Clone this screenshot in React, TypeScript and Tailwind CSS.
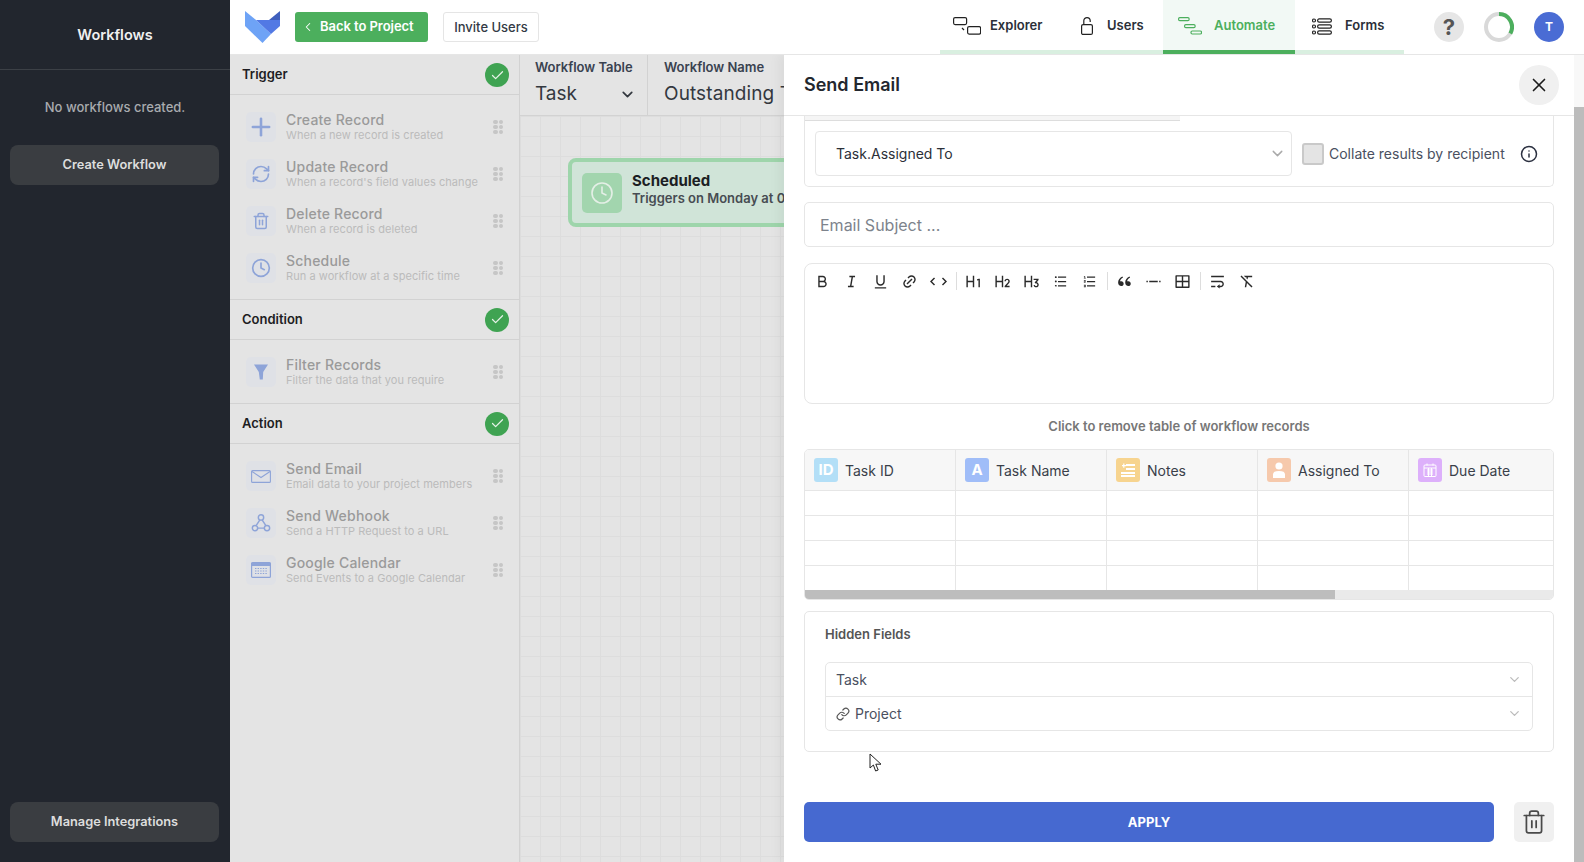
import { Check, ChevronDown, ChevronLeft, Clock, Info, Link, Plus, RefreshCw, Trash2, X } from "lucide-react";
import type { ReactNode } from "react";
import {
  RiBold,
  RiCodeSLine,
  RiDoubleQuotesL,
  RiFormatClear,
  RiH1,
  RiH2,
  RiH3,
  RiItalic,
  RiLayoutGridLine,
  RiLinkM,
  RiListOrdered,
  RiListUnordered,
  RiSeparator,
  RiTextWrap,
  RiUnderline,
} from "react-icons/ri";

function Logo() {
  return (
    <svg width="36" height="33" viewBox="0 0 36 33">
      <polygon points="0,0 11,9 26,23 17.500,32 0,15" fill="#6ea3f6" />
      <polygon points="11,9 35,9 35,15 26,23" fill="#5279e4" />
      <polygon points="24,9 35,0 35,9" fill="#3f5fbd" />
    </svg>
  );
}

function ExplorerIcon() {
  return (
    <svg width="28" height="18" viewBox="0 0 28 18" fill="none" stroke="#222" strokeWidth="1.2">
      <rect x="0.6" y="0.6" width="13" height="7" rx="1.5" />
      <rect x="14.6" y="9.6" width="13" height="7.5" rx="1.5" />
      <path d="M9 11l2 2" />
    </svg>
  );
}

function LockIcon() {
  return (
    <svg width="14" height="18" viewBox="0 0 14 18" fill="none" stroke="#222" strokeWidth="1.2">
      <rect x="1.600" y="7.600" width="10.800" height="9.800" rx="1.500" />
      <path d="M3.800 7.600V3.800a3.200 3.200 0 0 1 6.400 0V5" />
    </svg>
  );
}

function AutomateIcon() {
  return (
    <svg width="24" height="18" viewBox="0 0 24 18" fill="none" stroke="#4caf5d" strokeWidth="1.2">
      <rect x="0.6" y="0.6" width="10.5" height="3" rx="1.2" />
      <rect x="6.6" y="7.6" width="10.5" height="3" rx="1.2" />
      <rect x="13" y="14" width="10.5" height="3" rx="1.2" />
    </svg>
  );
}

function FormsIcon() {
  return (
    <svg width="20" height="17" viewBox="0 0 20 17" fill="none" stroke="#222" strokeWidth="1.2">
      <circle cx="2" cy="2.5" r="1.5" />
      <circle cx="2" cy="8.5" r="1.5" />
      <circle cx="2" cy="14.5" r="1.5" />
      <rect x="5.6" y="0.9" width="13.8" height="3.2" rx="1.6" />
      <rect x="5.6" y="6.9" width="13.8" height="3.2" rx="1.6" />
      <rect x="5.6" y="12.9" width="13.8" height="3.2" rx="1.6" />
    </svg>
  );
}

function FunnelIcon() {
  return (
    <svg width="16" height="16" viewBox="0 0 16 16" fill="#8ea4d8">
      <path d="M1 .5h14l-4.800 7.500L9.800 15.500H6.800L5.800 8z" />
    </svg>
  );
}

function MailIcon() {
  return (
    <svg width="20" height="13" viewBox="0 0 20 13" fill="none" stroke="#8ea4d8" strokeWidth="1.1">
      <rect x="0.6" y="0.6" width="18.8" height="11.8" rx="1" />
      <path d="M1 1.500l9 6 9-6" />
    </svg>
  );
}

function WebhookIcon() {
  return (
    <svg width="20" height="20" viewBox="0 0 18 18" fill="none" stroke="#8ea4d8" strokeWidth="1.3">
      <circle cx="9" cy="4" r="2.4" />
      <circle cx="3.6" cy="13.6" r="2.4" />
      <circle cx="14.4" cy="13.6" r="2.4" />
      <path d="M8 6.2L4.6 11.4M10 6.2l3.4 5.2M6 13.6h6" />
    </svg>
  );
}

function CalendarIcon() {
  return (
    <svg width="20" height="16" viewBox="0 0 20 16" fill="none">
      <rect x="0.6" y="0.6" width="18.8" height="14.8" rx="1" stroke="#8ea4d8" strokeWidth="1.2" />
      <rect x="0.6" y="0.6" width="18.8" height="3.4" fill="#8ea4d8" />
      <path d="M4 6.5h12M4 9h12M4 11.5h12" stroke="#8ea4d8" strokeWidth="1.2" strokeDasharray="1.4 1.2" />
    </svg>
  );
}

function Cursor() {
  return (
    <svg width="13" height="20" viewBox="0 0 13 20" fill="white" stroke="#222" strokeWidth="1" className="absolute top-[699px] left-[85px]">
      <path d="M1 1v14l3.400-3 2.200 6 2.600-1-2.400-5.800H12z" />
    </svg>
  );
}

function Dots() {
  return (
    <div className="grid grid-cols-2 gap-x-[1px] gap-y-[0.5px]">
      {[0, 1, 2, 3, 4, 5].map((i) => (
        <span key={i} className="h-[4.5px] w-[4.5px] rounded-full bg-[#c6c6c6]" />
      ))}
    </div>
  );
}

function PaletteItem({ icon, title, sub }: { icon: ReactNode; title: string; sub: string }) {
  return (
    <div className="flex h-[30px] items-center">
      <div className="flex h-[30px] w-[30px] shrink-0 items-center justify-center rounded-[5px] bg-[#dfe1e6]">{icon}</div>
      <div className="ml-[10px] min-w-0 flex-1">
        <div className="text-[14px] leading-[16px] font-medium tracking-[0.2px] text-[#9a9a9a]">{title}</div>
        <div className="text-[11px] leading-[14px] tracking-[0.06px] text-[#bbbbbb]">{sub}</div>
      </div>
      <Dots />
    </div>
  );
}

function Section({ title, head, children }: { title: string; head: string; children: ReactNode }) {
  return (
    <section className="border-b border-[#d2d2d2] last:border-b-0">
      <div className={`flex items-center justify-between border-b border-[#d2d2d2] pr-[10px] pl-3 ${head}`}>
        <span className="text-[13px] font-semibold text-[#1d1d22]">{title}</span>
        <span className="flex h-6 w-6 items-center justify-center rounded-full bg-[#3fa352]">
          <Check size={15} color="#e6f2e8" strokeWidth={2} />
        </span>
      </div>
      <div className="flex flex-col gap-[17px] pt-[17px] pr-[16px] pb-[16px] pl-[16px]">{children}</div>
    </section>
  );
}

function Tab({ icon, label, className, active }: { icon: ReactNode; label: string; className: string; active?: boolean }) {
  return (
    <div
      className={`flex h-[54px] items-center border-b-4 pt-[2px] ${className} ${
        active ? "border-[#4caf5d] bg-[#f2f9f5] text-[#4caf5d]" : "border-[#d9efe0] text-[#2b2f38]"
      }`}
    >
      {icon}
      <span className="text-[13px] font-semibold">{label}</span>
    </div>
  );
}

function ColIcon({ color, children }: { color: string; children: ReactNode }) {
  return (
    <span className={`flex h-6 w-6 shrink-0 items-center justify-center rounded-[3px] text-[15px] font-bold text-white ${color}`}>
      {children}
    </span>
  );
}

const columns: { name: string; color: string; glyph: ReactNode }[] = [
  { name: "Task ID", color: "bg-[#b3dff7]", glyph: "ID" },
  { name: "Task Name", color: "bg-[#a0bdf8]", glyph: "A" },
  {
    name: "Notes",
    color: "bg-[#f7d48f]",
    glyph: (
      <svg width="16" height="16" viewBox="0 0 16 16" fill="white">
        <path d="M6 2h9v2H6zM6 6h9v2H6zM1 10h14v2H1zM1 13h14v2H1zM2 3h1.2V1.5h1.2V3H6v1.2H4.4v1.6H3.2V4.2H2z" />
      </svg>
    ),
  },
  {
    name: "Assigned To",
    color: "bg-[#f6c9ac]",
    glyph: (
      <svg width="16" height="18" viewBox="0 0 16 18" fill="white">
        <circle cx="8" cy="5" r="3.6" />
        <path d="M2 17v-3.5C2 11 4 10 8 10s6 1 6 3.500V17z" />
      </svg>
    ),
  },
  {
    name: "Due Date",
    color: "bg-[#ddb0fb]",
    glyph: (
      <svg width="16" height="16" viewBox="0 0 16 16" fill="none" stroke="white" strokeWidth="1">
        <rect x="2" y="3" width="12" height="11.500" rx="1" />
        <path d="M5 1.500v2M11 1.500v2M2 6h12M5 8h6M5 10h6M5 12h6M6.500 6v8M9.500 6v8" />
      </svg>
    ),
  },
];

const toolbar = [
  [RiBold, RiItalic, RiUnderline, RiLinkM, RiCodeSLine],
  [RiH1, RiH2, RiH3, RiListUnordered, RiListOrdered],
  [RiDoubleQuotesL, RiSeparator, RiLayoutGridLine],
  [RiTextWrap, RiFormatClear],
];

export default function App() {
  return (
    <div className="relative flex h-[862px] w-[1584px] overflow-hidden bg-white font-['Inter',sans-serif] text-[#2b2f38]">
      {/* SIDEBAR */}
      <aside className="flex w-[230px] shrink-0 flex-col bg-[#22262e]">
        <div className="flex h-[70px] items-center justify-center border-b border-[#3c4046] text-[14.500px] font-semibold text-[#f0f0f0]">
          Workflows
        </div>
        <p className="mt-[28px] text-center text-[13px] leading-[18px] font-medium text-[#a9abaf]">No workflows created.</p>
        <button className="mx-[10px] mt-[29px] h-10 w-[209px] rounded-lg bg-[#3a3d41] text-[12.800px] font-semibold text-[#dddddd]">Create Workflow</button>
        <button className="mx-[10px] mt-auto mb-5 h-10 w-[209px] rounded-lg bg-[#3a3d41] text-[12.800px] font-semibold text-[#dddddd]">Manage Integrations</button>
      </aside>

      <div className="relative flex min-w-0 flex-1 flex-col">
        {/* HEADER */}
        <header className="relative z-20 flex h-[54px] shrink-0 items-center bg-white shadow-[0_1px_0_#e6e6e6]">
          <div className="ml-[15px]">
            <Logo />
          </div>
          <button className="ml-[14px] flex h-[30px] w-[133px] items-center rounded-[3px] bg-[#4caf5d] pl-[6px] text-[13px] font-semibold text-white">
            <ChevronLeft size={14} strokeWidth={1.8} />
            <span className="ml-[5px] tracking-[-0.05px]">Back to Project</span>
          </button>
          <button className="ml-[15px] h-[30px] w-[96px] rounded-[3px] border border-[#e5e5e5] pt-[2px] text-[13px] font-medium text-[#333a45]">Invite Users</button>
          <nav className="ml-auto flex">
            <Tab className="w-[123px] pl-[13px]" icon={<span className="mr-[9px]"><ExplorerIcon /></span>} label="Explorer" />
            <Tab className="w-[100px] pl-[17px]" icon={<span className="mr-[13px]"><LockIcon /></span>} label="Users" />
            <Tab className="w-[132px] pl-[15px]" active icon={<span className="mr-[12px]"><AutomateIcon /></span>} label="Automate" />
            <Tab className="w-[109px] pl-[17px]" icon={<span className="mr-[13px]"><FormsIcon /></span>} label="Forms" />
          </nav>
          <div className="ml-[30px] flex gap-5 pr-5">
            <span className="flex h-[30px] w-[30px] items-center justify-center rounded-full bg-[#e6e6e6] text-[22px] font-bold text-[#555555]">?</span>
            <svg width="30" height="30" viewBox="0 0 30 30" fill="none" strokeWidth="4">
              <circle cx="15" cy="15" r="13" stroke="#d9d9d9" />
              <path d="M15 2a13 13 0 0 1 11.300 19.400" stroke="#4caf5d" />
            </svg>
            <span className="flex h-[30px] w-[30px] items-center justify-center rounded-full bg-[#4a6cd4] text-[12px] font-bold text-white">T</span>
          </div>
        </header>

        {/* BODY */}
        <div className="flex min-h-0 flex-1 bg-[#e4e4e4]">
          <div className="w-[290px] shrink-0 border-r border-[#d2d2d2]">
            <Section title="Trigger" head="h-[41px] pt-[2px]">
              <PaletteItem icon={<Plus size={28} color="#8ea4d8" strokeWidth={2.200} />} title="Create Record" sub="When a new record is created" />
              <PaletteItem icon={<RefreshCw size={20} color="#8ea4d8" />} title="Update Record" sub="When a record's field values change" />
              <PaletteItem icon={<Trash2 size={18} color="#8ea4d8" />} title="Delete Record" sub="When a record is deleted" />
              <PaletteItem icon={<Clock size={20} color="#8ea4d8" />} title="Schedule" sub="Run a workflow at a specific time" />
            </Section>
            <Section title="Condition" head="h-[40px]">
              <PaletteItem icon={<FunnelIcon />} title="Filter Records" sub="Filter the data that you require" />
            </Section>
            <Section title="Action" head="h-[40px]">
              <PaletteItem icon={<MailIcon />} title="Send Email" sub="Email data to your project members" />
              <PaletteItem icon={<WebhookIcon />} title="Send Webhook" sub="Send a HTTP Request to a URL" />
              <PaletteItem icon={<CalendarIcon />} title="Google Calendar" sub="Send Events to a Google Calendar" />
            </Section>
          </div>

          {/* CANVAS */}
          <div className="min-w-0 flex-1 overflow-hidden">
            <div className="flex h-[62px] border-b border-[#d2d2d2]">
              <div className="w-[128px] border-r border-[#d2d2d2] pt-[4px] pl-[15px]">
                <div className="text-[13px] leading-[18px] font-semibold tracking-[-0.02px] text-[#3a4250]">Workflow Table</div>
                <div className="flex items-center justify-between pr-[11px] text-[19px] leading-[36px] text-[#33383f]">
                  Task
                  <ChevronDown size={17} strokeWidth={2.4} />
                </div>
              </div>
              <div className="pt-[4px] pl-[16px]">
                <div className="text-[13px] leading-[18px] font-semibold tracking-[-0.02px] text-[#3a4250]">Workflow Name</div>
                <div className="text-[19px] leading-[36px] tracking-[0.1px] whitespace-nowrap text-[#33383f]">Outstanding Tasks</div>
              </div>
            </div>
            <div className="h-full bg-[linear-gradient(#dddddd_1px,transparent_1px),linear-gradient(90deg,#dddddd_1px,transparent_1px)] bg-[size:20px_20px] pt-[42px] pl-[48px]">
              <div className="flex h-[69px] w-[330px] items-center rounded-[8px] border-4 border-[#9ed5ab] bg-[#d0e4d8] pl-[10px]">
                <span className="flex h-10 w-10 items-center justify-center rounded-[5px] bg-[#a2d5ae]">
                  <Clock size={24} color="#e4efe6" strokeWidth={1.6} />
                </span>
                <div className="mb-[6px] ml-[10px] whitespace-nowrap">
                  <div className="text-[15px] leading-[18px] font-bold text-[#1c1f24]">Scheduled</div>
                  <div className="text-[13px] leading-[17px] font-semibold text-[#474c52]">Triggers on Monday at 09:00</div>
                </div>
              </div>
            </div>
          </div>
        </div>

        {/* SEND EMAIL PANEL */}
        <div className="absolute top-[54px] right-0 bottom-0 z-10 flex w-[800px] bg-white shadow-[-6px_0_10px_rgba(0,0,0,0.04)]">
          <div className="flex min-w-0 flex-1 flex-col">
            <div className="flex h-[62px] shrink-0 items-center justify-between border-b border-[#e6e6e6] pr-[15px] pl-[20px]">
              <h2 className="text-[18px] font-semibold text-[#23272e]">Send Email</h2>
              <button className="flex h-10 w-10 items-center justify-center rounded-full bg-[#f0f0f0]">
                <X size={22} color="#1c1c1c" strokeWidth={1.8} />
              </button>
            </div>
            <div className="flex flex-col px-[20px]">
              <div className="rounded-b-[5px] border-x border-b border-[#e6e6e6]">
                <div className="h-[5px] w-[375px] border-b border-[#dddddd] bg-[#f5f5f5]" />
                <div className="flex items-center pt-[10px] pb-[10px] pl-[10px]">
                  <div className="flex h-[45px] w-[477px] items-center justify-between rounded-[4px] border border-[#e6e6e6] pr-[5px] pl-[20px] text-[14px] text-[#2b2f38]">
                    Task.Assigned To
                    <ChevronDown size={17} color="#aaaaaa" />
                  </div>
                  <span className="ml-[10px] h-[22px] w-[22px] rounded-[3px] border-2 border-[#c9c9c9] bg-[#e4e4e4]" />
                  <span className="ml-[5px] text-[14px] text-[#4a5060]">Collate results by recipient</span>
                  <Info size={18} color="#2b3040" className="ml-[15px]" />
                </div>
              </div>
              <div className="mt-[15px] flex h-[45px] items-center rounded-[5px] border border-[#e6e6e6] pl-[15px] text-[16px] text-[#7d838c]">Email Subject ...</div>
              <div className="mt-[16px] h-[141px] rounded-[8px] border border-[#e6e6e6] px-[3px] pt-[8px]">
                <div className="flex items-center">
                  {toolbar.map((group, g) => (
                    <div key={g} className={`flex h-[18px] items-center ${g < 3 ? "mr-[2px] border-r border-[#dddddd] pr-[3px]" : ""}`}>
                      {group.map((Icon, i) => (
                        <span key={i} className="flex w-[29px] items-center justify-center">
                          <Icon size={Icon === RiListUnordered || Icon === RiListOrdered ? 15 : 17} color="#2a2a2a" />
                        </span>
                      ))}
                    </div>
                  ))}
                </div>
              </div>
              <p className="mt-[13px] text-center text-[13px] leading-[18px] font-semibold text-[#777777]">Click to remove table of workflow records</p>
              <div className="mt-[14px] overflow-hidden rounded-[5px] border border-[#e6e6e6]">
                <div className="flex h-[41px] border-b border-[#e6e6e6] bg-[#f7f7f7]">
                  {columns.map((c, i) => (
                    <div key={c.name} className={`flex items-center gap-[7px] pl-[9px] text-[14px] text-[#3a3f4a] ${i < 4 ? "w-[151px] border-r border-[#e6e6e6]" : "flex-1"}`}>
                      <ColIcon color={c.color}>{c.glyph}</ColIcon>
                      {c.name}
                    </div>
                  ))}
                </div>
                {[25, 25, 25, 24].map((h, r) => (
                  <div key={r} style={{ height: h }} className={`flex ${r < 3 ? "border-b border-[#e6e6e6]" : ""}`}>
                    {[0, 1, 2, 3].map((c) => (
                      <div key={c} className="w-[151px] border-r border-[#e6e6e6]" />
                    ))}
                  </div>
                ))}
                <div className="h-[9px] bg-[#eaeaea]">
                  <div className="h-full w-[530px] bg-[#bdbdbd]" />
                </div>
              </div>
              <div className="mt-[11px] rounded-[5px] border border-[#e6e6e6] px-[20px] pt-[13px] pb-[20px]">
                <h3 className="text-[13px] leading-[18px] font-semibold text-[#555555]">Hidden Fields</h3>
                <div className="mt-[19px] rounded-[5px] border border-[#e6e6e6] text-[14px] text-[#4a5060]">
                  <div className="flex h-[34px] items-center justify-between border-b border-[#e6e6e6] px-[10px]">
                    Task
                    <ChevronDown size={15} color="#bbbbbb" />
                  </div>
                  <div className="flex h-[33px] items-center justify-between px-[10px]">
                    <span className="flex items-center gap-[5px]">
                      <Link size={14} color="#555555" />
                      Project
                    </span>
                    <ChevronDown size={15} color="#bbbbbb" />
                  </div>
                </div>
              </div>
              <div className="mt-[50px] flex gap-5">
                <button className="h-10 flex-1 rounded-[5px] bg-[#4669d0] pt-[2px] text-[13px] font-bold text-white">APPLY</button>
                <button className="flex h-10 w-10 items-center justify-center rounded-[5px] bg-[#f0f0f0]">
                  <Trash2 size={26} color="#4a4a4a" strokeWidth={1.6} />
                </button>
              </div>
            </div>
          </div>
          <div className="w-[10px] shrink-0 bg-[#f8f8f8] pt-[53px]">
            <div className="h-full bg-[#bcbcbc]" />
          </div>
          <Cursor />
        </div>
      </div>
    </div>
  );
}
